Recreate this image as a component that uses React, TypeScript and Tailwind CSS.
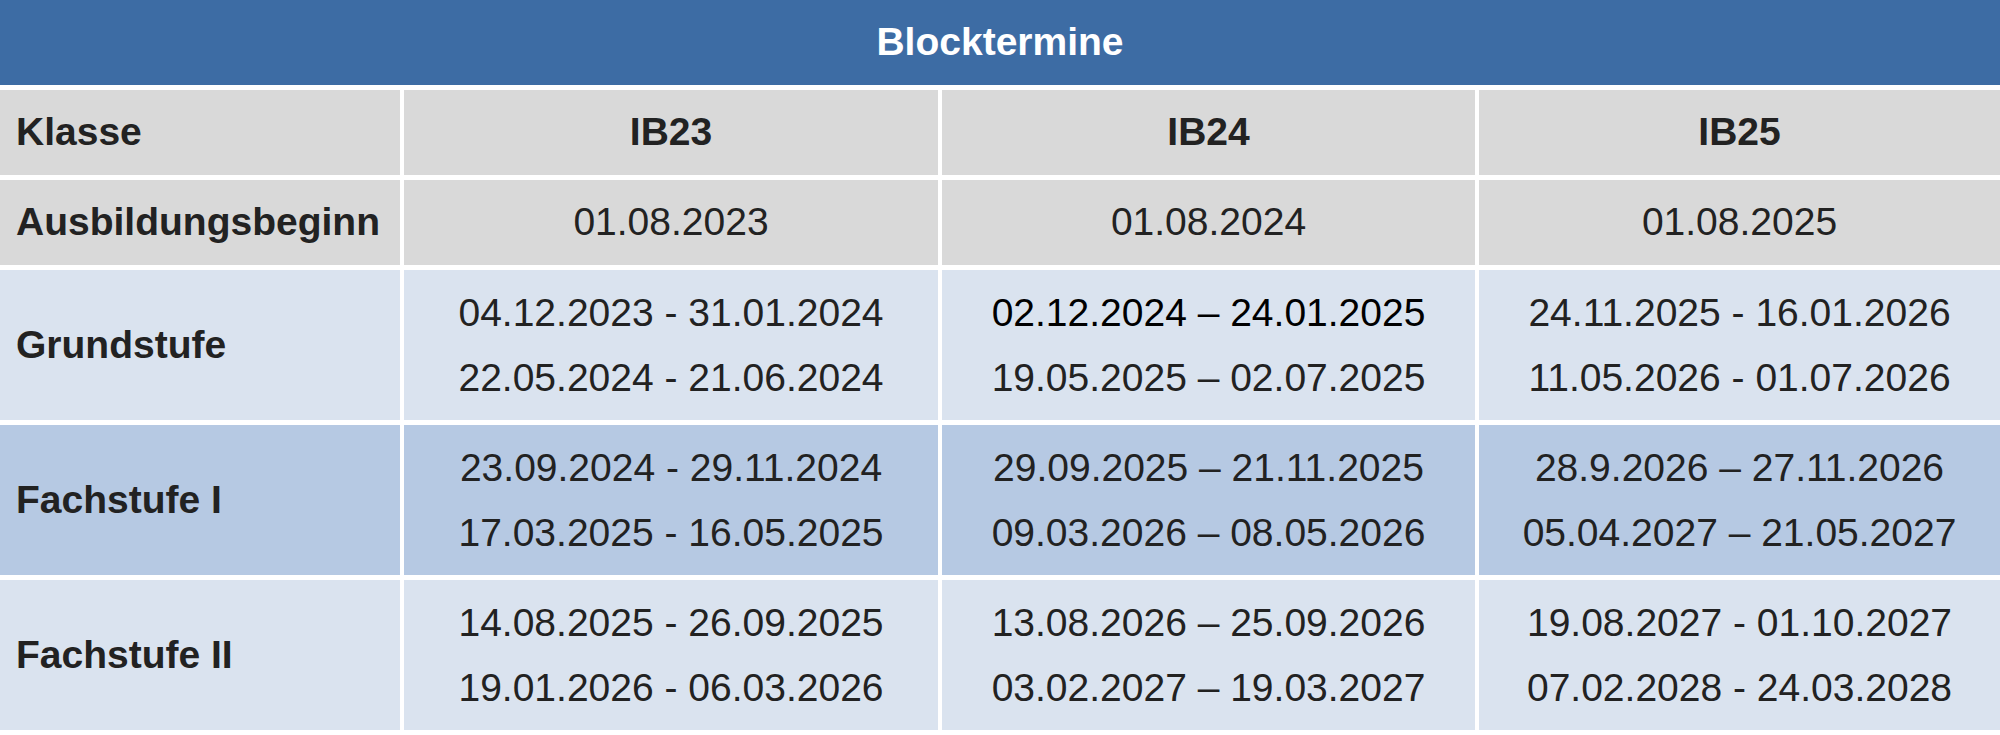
import React from "react";

const rows = [
  {
    label: "Grundstufe",
    bg: "bg-[#dae3ef]",
    cells: [
      [{ t: "04.12.2023 - 31.01.2024" }, { t: "22.05.2024 - 21.06.2024" }],
      [{ t: "02.12.2024 – 24.01.2025", dark: true }, { t: "19.05.2025 – 02.07.2025" }],
      [{ t: "24.11.2025 - 16.01.2026" }, { t: "11.05.2026 - 01.07.2026" }],
    ],
  },
  {
    label: "Fachstufe I",
    bg: "bg-[#b6c9e3]",
    cells: [
      [{ t: "23.09.2024 - 29.11.2024" }, { t: "17.03.2025 - 16.05.2025" }],
      [{ t: "29.09.2025 – 21.11.2025" }, { t: "09.03.2026 – 08.05.2026" }],
      [{ t: "28.9.2026 – 27.11.2026" }, { t: "05.04.2027 – 21.05.2027" }],
    ],
  },
  {
    label: "Fachstufe II",
    bg: "bg-[#dae3ef]",
    cells: [
      [{ t: "14.08.2025 - 26.09.2025" }, { t: "19.01.2026 - 06.03.2026" }],
      [{ t: "13.08.2026 – 25.09.2026" }, { t: "03.02.2027 – 19.03.2027" }],
      [{ t: "19.08.2027 - 01.10.2027" }, { t: "07.02.2028 - 24.03.2028" }],
    ],
  },
];

export default function App() {
  return (
    <div
      className="w-[2000px] h-[735px] bg-white text-[#222222] overflow-hidden"
      style={{ fontFamily: '"Liberation Sans", Arial, sans-serif' }}
    >
      <div className="grid grid-cols-[400px_534px_533px_1fr] grid-rows-[85px_85px_85px_150px_150px_150px] gap-x-[4px] gap-y-[5px]">
        <div className="col-span-4 bg-[#3d6ca4] flex items-center justify-center text-white font-bold text-[39px]">
          Blocktermine
        </div>

        <div className="bg-[#d9d9d9] flex items-center pl-[16px] font-bold text-[39px]">Klasse</div>
        <div className="bg-[#d9d9d9] flex items-center justify-center font-bold text-[39px]">IB23</div>
        <div className="bg-[#d9d9d9] flex items-center justify-center font-bold text-[39px]">IB24</div>
        <div className="bg-[#d9d9d9] flex items-center justify-center font-bold text-[39px]">IB25</div>

        <div className="bg-[#d9d9d9] flex items-center pl-[16px] font-bold text-[39px]">Ausbildungsbeginn</div>
        <div className="bg-[#d9d9d9] flex items-center justify-center text-[39px]">01.08.2023</div>
        <div className="bg-[#d9d9d9] flex items-center justify-center text-[39px]">01.08.2024</div>
        <div className="bg-[#d9d9d9] flex items-center justify-center text-[39px]">01.08.2025</div>

        {rows.map((r) => (
          <React.Fragment key={r.label}>
            <div className={`${r.bg} flex items-center pl-[16px] font-bold text-[39px]`}>{r.label}</div>
            {r.cells.map((c, i) => (
              <div key={i} className={`${r.bg} flex flex-col items-center justify-center text-[39px] leading-[65px]`}>
                {c.map((l, j) => (
                  <div key={j} className={l.dark ? "text-black" : ""}>
                    {l.t}
                  </div>
                ))}
              </div>
            ))}
          </React.Fragment>
        ))}
      </div>
    </div>
  );
}
